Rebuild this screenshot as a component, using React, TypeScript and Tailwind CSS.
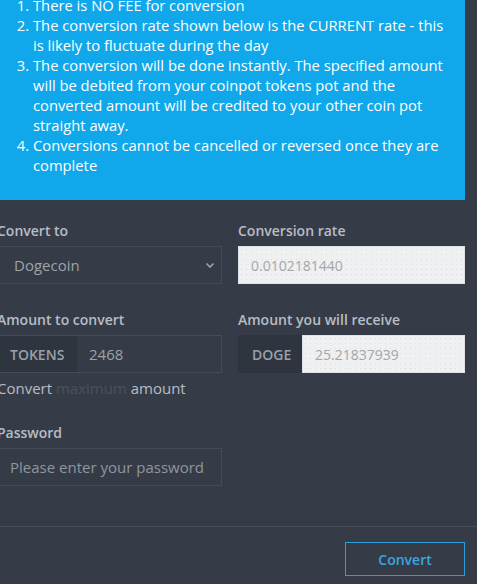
import React from "react";

const font = { fontFamily: "'Open Sans', 'Liberation Sans', sans-serif" };

function App() {
  return (
    <div
      className="w-[477px] h-[584px] overflow-hidden bg-[#363c47] font-['Open_Sans',sans-serif]"
    >
      <div className="w-[465px]">
        {/* notice box */}
        <div className="-mt-[5px] bg-[#10a8eb] pb-[25px] -ml-[10px] pl-[10px] pr-[13px]">
          <ol className="list-decimal pl-[33px] text-[14.75px] leading-[20px] text-white">
            <li>There is NO FEE for conversion</li>
            <li>
              The conversion rate shown below is the CURRENT rate - this is
              likely to fluctuate during the day
            </li>
            <li>
              The conversion will be done instantly. The specified amount will
              be debited from your coinpot tokens pot and the converted amount
              will be credited to your other coin pot straight away.
            </li>
            <li>
              Conversions cannot be cancelled or reversed once they are
              complete
            </li>
          </ol>
        </div>

        <div className="grid grid-cols-[225px_227px] gap-x-4 -ml-[3px] mt-[21px]">
          <div>
            <label className="block text-[14px] leading-[20px] font-semibold text-[#b7bdc5] mb-[5px]">
              Convert to
            </label>
            <div className="flex items-center justify-between h-[38px] border border-[#454c57] pl-[16px] pr-[5px]">
              <span className="text-[15px] text-[#9ca3ab]">Dogecoin</span>
              <svg width="12" height="12" viewBox="0 0 12 12" fill="none">
                <path d="M2.5 4.5L6 8l3.5-3.5" stroke="#9ca3ab" strokeWidth="1.6" />
              </svg>
            </div>
          </div>
          <div>
            <label className="block text-[14px] leading-[20px] font-semibold text-[#b7bdc5] mb-[5px]">
              Conversion rate
            </label>
            <div className="flex items-center h-[38px] bg-[#eef0f1] bg-[radial-gradient(#d9dcdf_0.6px,transparent_0.8px)] bg-[length:5px_5px] border border-[#dfe2e5] pl-[12px]">
              <span className="text-[14px] text-[#a3a7ab]">0.0102181440</span>
            </div>
          </div>

          <div className="mt-[26px]">
            <label className="block text-[14px] leading-[20px] font-semibold text-[#b7bdc5] mb-[5px]">
              Amount to convert
            </label>
            <div className="flex h-[38px] border border-[#454c57]">
              <div className="flex items-center bg-[#2f353f] px-[12px] w-[79px] text-[14px] font-semibold text-[#9aa1aa]">
                TOKENS
              </div>
              <div className="flex items-center pl-[12px] text-[15px] text-[#9ca3ab]">
                2468
              </div>
            </div>
            <div className="mt-[5px] text-[15px] leading-[20px] text-[#b7bdc5]">
              Convert <span className="text-[#4a515c]">maximum</span> amount
            </div>
          </div>
          <div className="mt-[26px]">
            <label className="block text-[14px] leading-[20px] font-semibold text-[#b7bdc5] mb-[5px]">
              Amount you will receive
            </label>
            <div className="flex h-[38px]">
              <div className="flex items-center bg-[#2f353f] px-[14px] w-[64px] text-[14px] font-semibold text-[#9aa1aa]">
                DOGE
              </div>
              <div className="flex flex-1 items-center bg-[#eef0f1] bg-[radial-gradient(#d9dcdf_0.6px,transparent_0.8px)] bg-[length:5px_5px] border border-[#dfe2e5] pl-[12px] text-[14px] text-[#a3a7ab]">
                25.21837939
              </div>
            </div>
          </div>

          <div className="mt-[25px]">
            <label className="block text-[14px] leading-[20px] font-semibold text-[#b7bdc5] mb-[5px]">
              Password
            </label>
            <div className="flex items-center h-[38px] border border-[#454c57] pl-[12px]">
              <span className="text-[15px] text-[#8f969e]">
                Please enter your password
              </span>
            </div>
          </div>
        </div>
      </div>

      <div className="mt-[40px] border-t border-[#474d57] w-[477px]" />
      <div className="flex w-[465px] justify-end pt-[15px]">
        <button
          style={font}
          className="w-[120px] h-[34px] border border-[#2a9fd8] text-[#3aa6e0] text-[14px] font-semibold"
        >
          Convert
        </button>
      </div>
    </div>
  );
}

export default App;
